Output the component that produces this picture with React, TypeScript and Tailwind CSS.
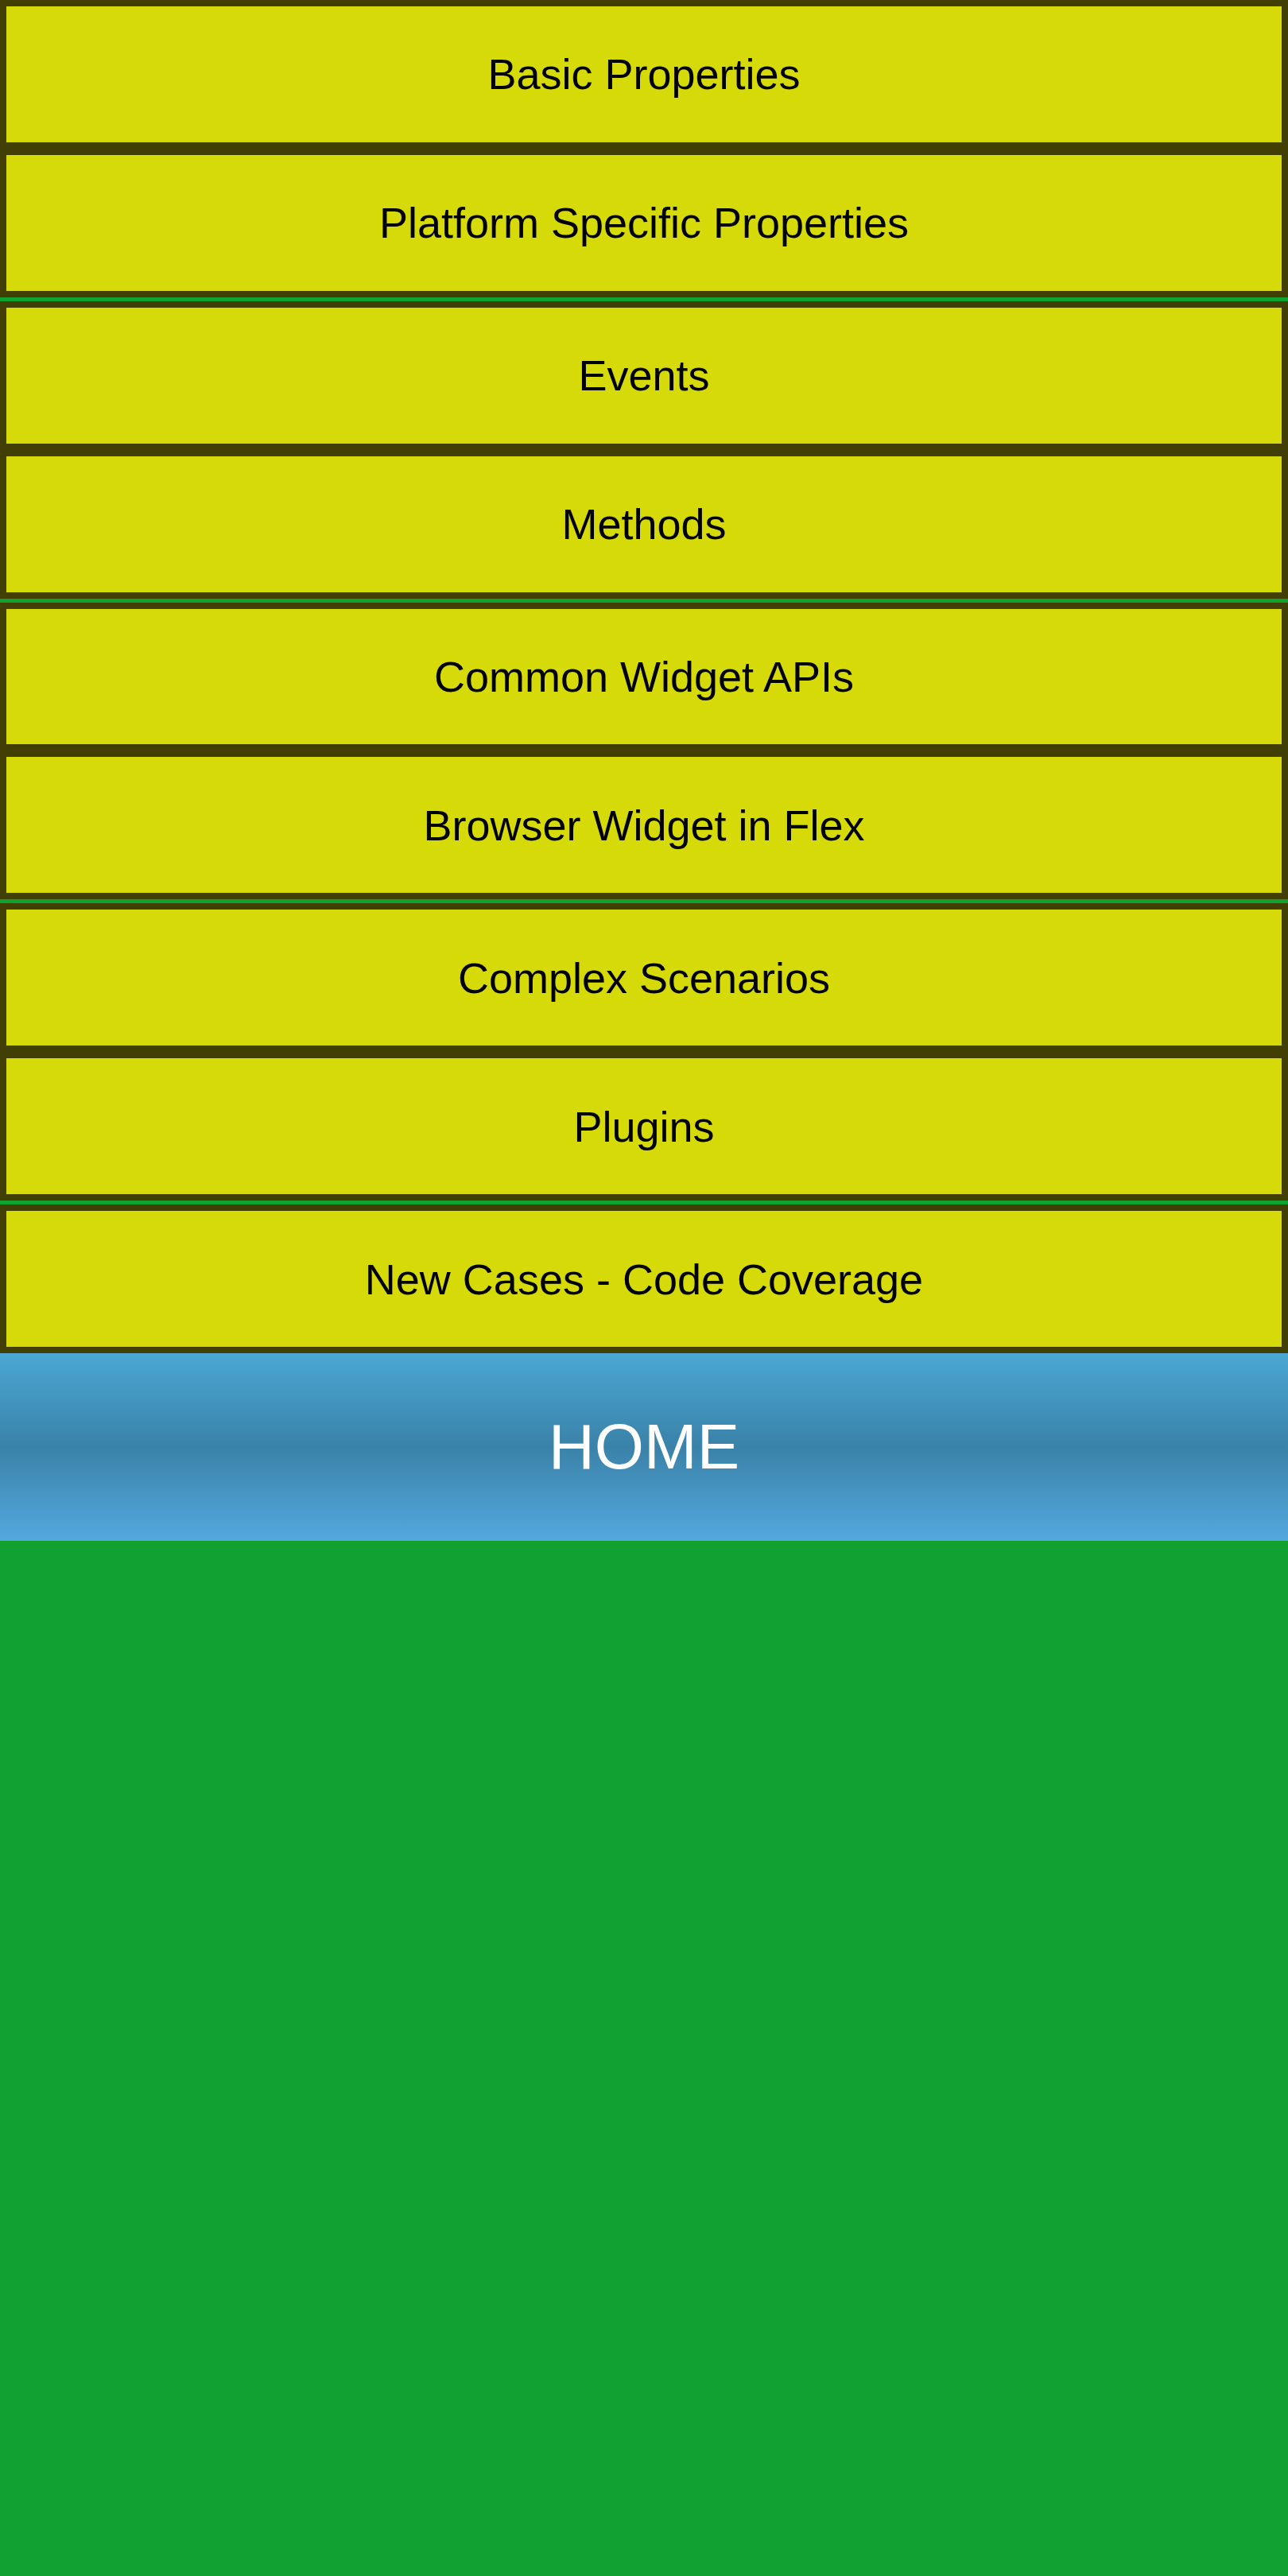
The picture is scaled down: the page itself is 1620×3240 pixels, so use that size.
import React from "react";

const groups: string[][] = [
  ["Basic Properties", "Platform Specific Properties"],
  ["Events", "Methods"],
  ["Common Widget APIs", "Browser Widget in Flex"],
  ["Complex Scenarios", "Plugins"],
  ["New Cases - Code Coverage"],
];

export default function App() {
  return (
    <div
      className="w-[1620px] h-[3240px] bg-[#11a131] flex flex-col"
      style={{ fontFamily: '"Liberation Sans", Arial, sans-serif' }}
    >
      <div className="flex flex-col gap-[5px]">
        {groups.map((g, i) => (
          <div key={i} className="flex flex-col">
            {g.map((label) => (
              <div
                key={label}
                className="h-[186.9px] border-8 border-[#423f05] bg-[#d6da08] flex items-center justify-center text-[54px] leading-none text-black"
              >
                {label}
              </div>
            ))}
          </div>
        ))}
      </div>
      <div className="h-[236px] flex items-center justify-center bg-[linear-gradient(to_bottom,#4aa7d3,#3a82a9_50%,#53a8de)] text-white text-[80px] leading-none">
        HOME
      </div>
    </div>
  );
}
